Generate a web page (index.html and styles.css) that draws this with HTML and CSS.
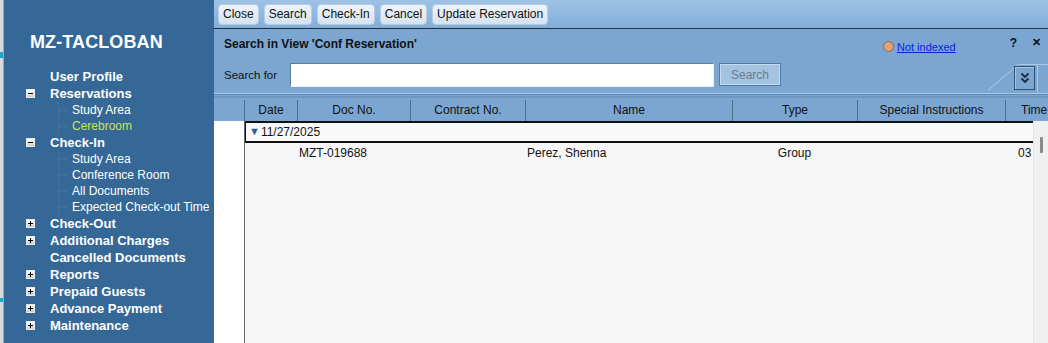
FILE: index.html
```html
<!DOCTYPE html>
<html lang="en">
<head>
  <meta charset="UTF-8" />
  <title>MZ-TACLOBAN - Conf Reservation</title>
  <link rel="stylesheet" href="styles.css">
</head>
<body>
  <div class="edge"><span class="edge-mark top"></span><span class="edge-mark bottom"></span></div>

  <nav class="sidebar">
    <h1 class="brand">MZ-TACLOBAN</h1>
    <ul class="tree">
      <li class="node"><span class="exp none"></span>User Profile</li>
      <li class="node"><span class="exp minus"></span>Reservations</li>
      <li class="sub-group">
        <div class="sub">Study Area</div>
        <div class="sub selected">Cerebroom</div>
      </li>
      <li class="node"><span class="exp minus"></span>Check-In</li>
      <li class="sub-group">
        <div class="sub">Study Area</div>
        <div class="sub">Conference Room</div>
        <div class="sub">All Documents</div>
        <div class="sub">Expected Check-out Time</div>
      </li>
      <li class="node"><span class="exp plus"></span>Check-Out</li>
      <li class="node"><span class="exp plus"></span>Additional Charges</li>
      <li class="node"><span class="exp none"></span>Cancelled Documents</li>
      <li class="node"><span class="exp plus"></span>Reports</li>
      <li class="node"><span class="exp plus"></span>Prepaid Guests</li>
      <li class="node"><span class="exp plus"></span>Advance Payment</li>
      <li class="node"><span class="exp plus"></span>Maintenance</li>
    </ul>
  </nav>

  <main class="main">
    <div class="toolbar">
      <button class="tb-btn">Close</button>
      <button class="tb-btn">Search</button>
      <button class="tb-btn">Check-In</button>
      <button class="tb-btn">Cancel</button>
      <button class="tb-btn">Update Reservation</button>
    </div>

    <section class="search-panel">
      <div class="panel-head">
        <span class="panel-title">Search in View 'Conf Reservation'</span>
        <span class="index-state"><span class="dot"></span><a href="#">Not indexed </a></span>
        <span class="panel-ctrl help">?</span>
        <span class="panel-ctrl close">&#x2715;</span>
      </div>
      <div class="panel-row">
        <label class="search-label">Search for</label>
        <input class="search-input" type="text">
        <button class="search-btn" disabled>Search</button>
        <div class="spacer"></div>
        <div class="tab">
          <svg class="tab-line" width="60" height="30" viewBox="0 0 60 30">
            <path d="M0 27.5 L30 1.5 L60 1.5" fill="none" stroke="#a9c9e8" stroke-width="1"/>
            <path d="M49.5 2 L49.5 30" fill="none" stroke="#a9c9e8" stroke-width="1"/>
          </svg>
          <button class="more-btn">
            <svg width="10" height="12" viewBox="0 0 10 12">
              <path d="M1.5 1.5 L5 5 L8.5 1.5 M1.5 6.5 L5 10 L8.5 6.5" fill="none" stroke="#1b2a3a" stroke-width="1.8"/>
            </svg>
          </button>
        </div>
      </div>
    </section>

    <div class="grid">
      <div class="grid-head">
        <div class="hc gutter"></div>
        <div class="hc c-date">Date</div>
        <div class="hc c-doc">Doc No.</div>
        <div class="hc c-contract">Contract No.</div>
        <div class="hc c-name">Name</div>
        <div class="hc c-type">Type</div>
        <div class="hc c-special">Special Instructions</div>
        <div class="hc c-time">Time</div>
      </div>
      <div class="grid-body">
        <div class="rows">
          <div class="group-row">
            <span class="caret">&#9660;</span>11/27/2025
          </div>
          <div class="row">
            <div class="cell c-date"></div>
            <div class="cell c-doc">MZT-019688</div>
            <div class="cell c-contract"></div>
            <div class="cell c-name">Perez, Shenna</div>
            <div class="cell c-type center">Group</div>
            <div class="cell c-special"></div>
            <div class="cell c-time">03</div>
          </div>
        </div>
        <div class="vscroll"><span class="thumb"></span></div>
      </div>
    </div>
  </main>
</body>
</html>
```

FILE: styles.css
```css
* {
  box-sizing: border-box;
}

html, body {
  height: 100%;
}

body {
  margin: 0;
  display: flex;
  font-family: "Liberation Sans", Arial, sans-serif;
  font-size: 12px;
  color: #111;
  overflow: hidden;
}

/* thin window edge on the far left */
.edge {
  width: 4px;
  background: #d7dbe0;
  display: flex;
  flex-direction: column;
  border-right: 1px solid #9aa6b2;
}

.edge-mark {
  width: 3px;
  height: 6px;
  background: #1ea7c9;
}

.edge-mark.top {
  margin-top: 52px;
}

.edge-mark.bottom {
  margin-top: 240px;
  height: 4px;
}

/* sidebar */
.sidebar {
  width: 210px;
  background: #356896;
  color: #fff;
  flex: none;
}

.brand {
  margin: 0;
  padding: 31px 0 0 26px;
  height: 68px;
  font-size: 18px;
  font-weight: bold;
  letter-spacing: 0.1px;
  line-height: 22px;
}

.tree {
  list-style: none;
  margin: 0;
  padding: 0;
}

.node {
  height: 17px;
  line-height: 17px;
  padding-left: 22px;
  font-size: 13px;
  font-weight: bold;
  display: flex;
  align-items: center;
  white-space: nowrap;
}

.exp {
  width: 9px;
  height: 9px;
  margin-right: 15px;
  position: relative;
  flex: none;
}

.exp.minus, .exp.plus {
  background: linear-gradient(#ffffff, #c9ced4);
  border: 1px solid #e8ecf0;
}

.exp.minus::before, .exp.plus::before {
  content: "";
  position: absolute;
  left: 1px;
  top: 3px;
  width: 5px;
  height: 1px;
  background: #000;
}

.exp.plus::after {
  content: "";
  position: absolute;
  left: 3px;
  top: 1px;
  width: 1px;
  height: 5px;
  background: #000;
}

.sub-group {
  margin-left: 54px;
  border-left: 1px dotted #4f7a9c;
}

.sub {
  height: 16px;
  line-height: 16px;
  padding-left: 13px;
  font-size: 12px;
  white-space: nowrap;
  position: relative;
}

.sub::before {
  content: "";
  position: absolute;
  left: 0;
  top: 8px;
  width: 8px;
  border-top: 1px dotted #4f7a9c;
}

.sub.selected {
  color: #c6e35a;
}

/* main area */
.main {
  flex: 1;
  display: flex;
  flex-direction: column;
  min-width: 0;
}

.toolbar {
  height: 29px;
  background: linear-gradient(#9ec2e6, #82aed9);
  display: flex;
  align-items: center;
  gap: 5px;
  padding: 0 0 0 4px;
  border-bottom: 1px solid #1f3347;
}

.tb-btn {
  font-family: "Liberation Sans", Arial, sans-serif;
  font-size: 12px;
  color: #111;
  height: 21px;
  padding: 0 4px;
  border: 1px solid #b8cde2;
  border-radius: 4px;
  background: linear-gradient(#eef4fa, #d4e2f0);
}

.search-panel {
  background: #7aa6d1;
  height: 67px;
  padding: 0 0 0 10px;
}

.panel-head {
  display: flex;
  align-items: center;
  height: 27px;
}

.panel-title {
  font-weight: bold;
  font-size: 12px;
  color: #111;
  padding-top: 3px;
}

.index-state {
  margin-left: auto;
  display: flex;
  align-items: center;
  margin-top: 8px;
  font-size: 11px;
}

.dot {
  width: 11px;
  height: 11px;
  border-radius: 50%;
  background: #e0a279;
  border: 1px solid #8a6a50;
  margin-right: 3px;
}

.index-state a {
  color: #0a1fe0;
  text-decoration: underline;
}

.panel-ctrl {
  font-weight: bold;
  font-size: 12px;
  color: #111;
}

.panel-ctrl.help {
  margin-left: 54px;
}

.panel-ctrl.close {
  margin-left: 15px;
  margin-right: 7px;
  font-size: 11px;
}

.panel-row {
  display: flex;
  align-items: center;
  height: 38px;
  border-bottom: 1px solid #a9c9e8;
  margin-left: -10px;
  padding-left: 10px;
  box-shadow: 0 1px 0 #5c87b2;
}

.search-label {
  width: 66px;
  font-size: 11.5px;
  color: #111;
}

.search-input {
  width: 424px;
  height: 24px;
  border: 1px solid #5d7f9e;
  border-bottom-color: #e9f1f8;
  border-right-color: #e9f1f8;
  background: #fff;
  margin: 0;
}

.search-btn {
  margin-left: 5px;
  width: 62px;
  height: 23px;
  font-family: "Liberation Sans", Arial, sans-serif;
  font-size: 12px;
  color: #6a7c8e;
  background: #a4c3e1;
  border: 1px solid #4f7aa4;
  box-shadow: inset 0 0 0 1px #c5dbef;
}

.spacer {
  flex: 1;
}

.tab {
  width: 60px;
  height: 30px;
  align-self: flex-end;
  position: relative;
}

.tab-line {
  position: absolute;
  left: 0;
  top: 0;
}

.more-btn {
  position: absolute;
  left: 26px;
  top: 3px;
  width: 21px;
  height: 24px;
  padding: 0;
  border: 1px solid #34516f;
  background: #7aa6d1;
  box-shadow: inset 1px 1px 0 #a6c6e6;
  display: flex;
  align-items: center;
  justify-content: center;
}

/* grid */
.grid {
  flex: 1;
  display: flex;
  flex-direction: column;
  min-height: 0;
}

.grid-head {
  display: flex;
  height: 25px;
  background: #7aa6d1;
  border-top: 2px solid #6c98c3;
  white-space: nowrap;
  overflow: hidden;
}

.hc {
  flex: none;
  text-align: center;
  font-size: 12px;
  color: #111;
  border-left: 1px solid #4d6f90;
  margin-top: 2px;
  line-height: 21px;
}

.hc.gutter {
  border-left: none;
}

.gutter { width: 30px; }
.c-date { width: 53px; }
.c-doc { width: 113px; }
.c-contract { width: 115px; }
.c-name { width: 207px; }
.c-type { width: 125px; }
.c-special { width: 148px; }
.c-time { width: 60px; }

.hc.c-time {
  text-align: left;
  padding-left: 15px;
}

.grid-body {
  flex: 1;
  display: flex;
  background: #fff;
  min-height: 0;
}

.rows {
  flex: 1;
  margin-left: 30px;
  border-left: 1px solid #6a6a6a;
  background: #f7f7f7;
  overflow: hidden;
}

.group-row {
  height: 22px;
  line-height: 18px;
  border-top: 2px solid #111;
  border-bottom: 2px solid #111;
  border-left: 1px solid #111;
  padding-left: 3px;
  font-size: 12px;
  background: #f9f9f9;
}

.caret {
  color: #2b5f8f;
  font-size: 11px;
  margin-right: 1px;
  position: relative;
  top: -1px;
}

.row {
  display: flex;
  height: 20px;
  line-height: 20px;
  margin-left: -1px;
  white-space: nowrap;
}

.cell {
  flex: none;
  padding-left: 2px;
  overflow: hidden;
  font-size: 12px;
}

.cell.center {
  text-align: center;
  padding-left: 0;
}

.row .c-time {
  width: 28px;
  padding-left: 13px;
}

.vscroll {
  width: 15px;
  background: #f0f0f0;
  border-left: 1px solid #e4e4e4;
  position: relative;
  flex: none;
}

.thumb {
  position: absolute;
  left: 6px;
  top: 16px;
  width: 3px;
  height: 16px;
  background: #8a8a8a;
  border-radius: 1px;
}
```
